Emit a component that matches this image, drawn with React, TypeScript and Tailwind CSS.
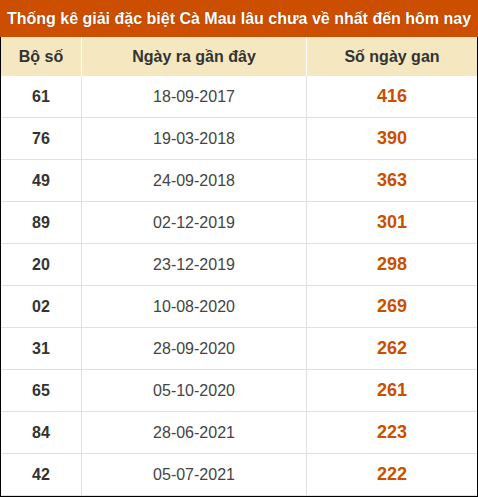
import React from 'react';

const rows: [string, string, string][] = [
  ['61', '18-09-2017', '416'],
  ['76', '19-03-2018', '390'],
  ['49', '24-09-2018', '363'],
  ['89', '02-12-2019', '301'],
  ['20', '23-12-2019', '298'],
  ['02', '10-08-2020', '269'],
  ['31', '28-09-2020', '262'],
  ['65', '05-10-2020', '261'],
  ['84', '28-06-2021', '223'],
  ['42', '05-07-2021', '222'],
];

const App: React.FC = () => {
  return (
    <div className="w-[478px] bg-white" style={{ fontFamily: '"Liberation Sans", Arial, sans-serif' }}>
      <div className="h-[37px] bg-[#cc4e00] flex items-center justify-center whitespace-nowrap text-white font-bold text-[16px] [text-shadow:0_0_1px_rgba(0,0,0,0.4)]">
        Thống kê giải đặc biệt Cà Mau lâu chưa về nhất đến hôm nay
      </div>
      <div className="border-l border-r border-b border-black">
        <div className="flex h-[39px] bg-[#f5e7c0] text-[#333] font-bold text-[16px]">
          <div className="w-[81px] flex items-center justify-center border-r border-white">Bộ số</div>
          <div className="w-[225px] flex items-center justify-center border-r border-white">Ngày ra gần đây</div>
          <div className="flex-1 flex items-center justify-center">Số ngày gan</div>
        </div>
        {rows.map(([so, ngay, gan]) => (
          <div key={so} className="flex h-[42px] border-b border-[#e0e0e0] text-[16px]">
            <div className="w-[81px] flex items-center justify-center border-r border-[#e0e0e0] font-bold text-[#333]">{so}</div>
            <div className="w-[225px] flex items-center justify-center border-r border-[#e0e0e0] text-[#444]">{ngay}</div>
            <div className="flex-1 flex items-center justify-center font-bold text-[18px] text-[#cc4e00]">{gan}</div>
          </div>
        ))}
      </div>
    </div>
  );
};

export default App;
